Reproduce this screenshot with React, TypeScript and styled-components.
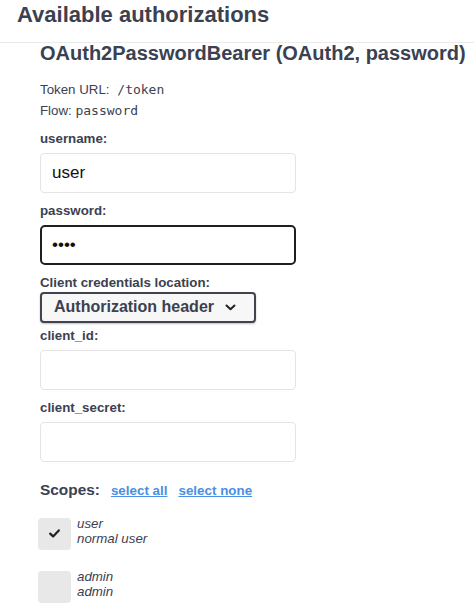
import React from "react";
import styled, { createGlobalStyle } from "styled-components";

const GlobalStyle = createGlobalStyle`
  html, body { margin: 0; padding: 0; background: #ffffff; }
  body {
    font-family: "Liberation Sans", Arial, sans-serif;
    color: #3b4151;
  }
  * { box-sizing: border-box; }
`;

const Modal = styled.div`
  width: 474px;
  background: #fff;
`;

const Header = styled.div`
  padding: 2px 0 14px 17px;
  border-bottom: 1px solid #ebebeb;
`;

const Title = styled.h3`
  margin: 0;
  font-size: 22px;
  line-height: 26px;
  font-weight: 700;
  color: #3b4151;
`;

const Body = styled.div`
  padding: 0 0 0 40px;
`;

const SchemeTitle = styled.h4`
  margin: 0;
  font-size: 20px;
  line-height: 21px;
  font-weight: 700;
  color: #3b4151;
  white-space: nowrap;
`;

const Info = styled.p<{ $first?: boolean }>`
  margin: ${(p) => (p.$first ? "15px 0 0" : "0")};
  font-size: 13.3px;
  line-height: 21.4px;
  color: #3b4151;
`;

const Code = styled.code`
  font-family: "DejaVu Sans Mono", "Liberation Mono", monospace;
  font-size: 13px;
  white-space: pre;
  color: #3b4151;
`;

const Form = styled.div`
  margin-top: 9px;
`;

const Label = styled.label`
  display: block;
  font-size: 13.3px;
  line-height: 16px;
  font-weight: 700;
  color: #3b4151;
`;

const TextInput = styled.input<{ $focused?: boolean }>`
  display: block;
  width: 256px;
  height: 40px;
  margin: 6px 0 10px;
  padding: 0 ${(p) => (p.$focused ? "10px" : "11px")};
  font-family: "Liberation Sans", Arial, sans-serif;
  font-size: 17px;
  color: #111;
  background: #fff;
  border: ${(p) => (p.$focused ? "2px solid #1f1f1f" : "1px solid #e4e4e4")};
  border-radius: ${(p) => (p.$focused ? "5px" : "4px")};
  outline: none;
`;

const SelectBox = styled.div`
  display: flex;
  align-items: center;
  justify-content: space-between;
  width: 216px;
  height: 31px;
  margin: 1px 0 5px;
  padding: 0 18px 0 12px;
  background: #f7f7f7;
  border: 2px solid #41444e;
  border-radius: 4px;
  box-shadow: 0 1px 2px rgba(0, 0, 0, 0.25);
  font-size: 16px;
  font-weight: 700;
  color: #3b4151;
`;

const Scopes = styled.div`
  display: flex;
  align-items: baseline;
  gap: 11px;
  margin-top: 18px;
  line-height: 20px;
`;

const ScopesTitle = styled.h2`
  margin: 0;
  font-size: 15.4px;
  font-weight: 700;
  color: #3b4151;
`;

const ScopeLink = styled.a`
  font-size: 13.4px;
  font-weight: 700;
  color: #4990e2;
  text-decoration: underline;
  cursor: pointer;
`;

const ScopeList = styled.div`
  margin-top: 15px;
`;

const ScopeItem = styled.div`
  display: flex;
  align-items: flex-start;
  margin-bottom: 19px;
`;

const CheckBox = styled.span`
  display: flex;
  align-items: center;
  justify-content: center;
  width: 33px;
  height: 32px;
  margin: 2px 0 0 -2px;
  background: #e8e8e8;
  border-radius: 4px;
  flex-shrink: 0;
`;

const ScopeText = styled.div`
  margin-left: 6px;
  font-size: 13.3px;
  line-height: 15px;
  font-style: italic;
  color: #3b4151;
`;

const ScopeLine = styled.p`
  margin: 0;
`;

const Check = () => (
  <svg width="11" height="9" viewBox="0 0 11 9" aria-hidden="true">
    <path
      d="M1.2 4.6 L4.1 7.4 L9.8 1.4"
      fill="none"
      stroke="#222"
      strokeWidth="2.2"
      strokeLinecap="round"
      strokeLinejoin="round"
    />
  </svg>
);

const Chevron = () => (
  <svg width="11" height="7" viewBox="0 0 11 7" aria-hidden="true">
    <path
      d="M1.5 1.5 L5.5 5.3 L9.5 1.5"
      fill="none"
      stroke="#222"
      strokeWidth="2"
      strokeLinecap="round"
      strokeLinejoin="round"
    />
  </svg>
);

const scopes = [
  { name: "user", description: "normal user", checked: true },
  { name: "admin", description: "admin", checked: false },
];

export default function App() {
  return (
    <>
      <GlobalStyle />
      <Modal>
        <Header>
          <Title>Available authorizations</Title>
        </Header>
        <Body>
          <SchemeTitle>OAuth2PasswordBearer (OAuth2, password)</SchemeTitle>
          <Info $first>
            Token URL:<Code> /token</Code>
          </Info>
          <Info>
            Flow: <Code>password</Code>
          </Info>
          <Form>
            <Label>username:</Label>
            <TextInput type="text" value="user" readOnly />
            <Label>password:</Label>
            <TextInput type="password" value="pass" readOnly $focused />
            <Label>Client credentials location:</Label>
            <SelectBox>
              <span>Authorization header</span>
              <Chevron />
            </SelectBox>
            <Label>client_id:</Label>
            <TextInput type="text" value="" readOnly />
            <Label>client_secret:</Label>
            <TextInput type="text" value="" readOnly />
          </Form>
          <Scopes>
            <ScopesTitle>Scopes:</ScopesTitle>
            <ScopeLink>select all</ScopeLink>
            <ScopeLink>select none</ScopeLink>
          </Scopes>
          <ScopeList>
            {scopes.map((s) => (
              <ScopeItem key={s.name}>
                <CheckBox>{s.checked && <Check />}</CheckBox>
                <ScopeText>
                  <ScopeLine>{s.name}</ScopeLine>
                  <ScopeLine>{s.description}</ScopeLine>
                </ScopeText>
              </ScopeItem>
            ))}
          </ScopeList>
        </Body>
      </Modal>
    </>
  );
}
